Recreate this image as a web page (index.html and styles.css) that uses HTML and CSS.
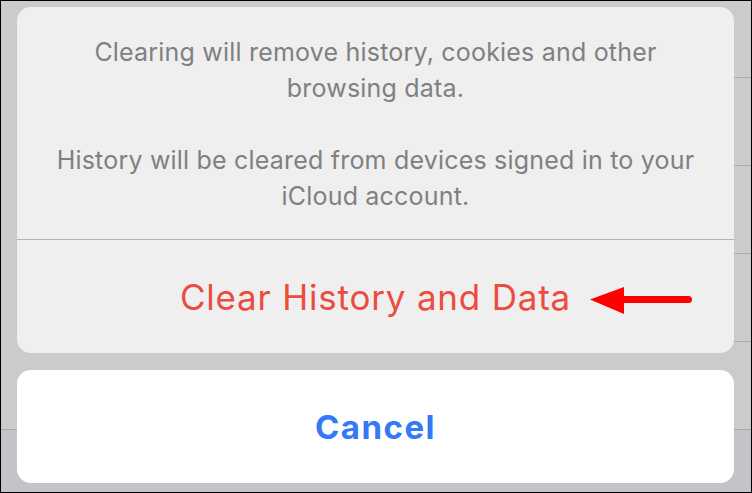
FILE: index.html
```html
<!DOCTYPE html>
<html lang="en">
<head>
  <meta charset="UTF-8">
  <meta name="viewport" content="width=device-width, initial-scale=1.0">
  <title>Clear History and Data</title>
  <link rel="stylesheet" href="styles.css">
</head>
<body>
  <!-- dimmed settings list behind the sheet -->
  <div class="list">
    <div class="row first"></div>
    <div class="row"></div>
    <div class="row"></div>
    <div class="row"></div>
    <div class="row"></div>
  </div>
  <div class="toolbar"></div>

  <div class="sheet">
    <div class="group">
      <div class="message">
        <p>Clearing will remove history, cookies and other<br>browsing data.</p>
        <p>History will be cleared from devices signed in to your<br>iCloud account.</p>
      </div>
      <div class="action">
        <span class="destructive">Clear History and Data</span>
        <svg class="arrow" width="106" height="32" viewBox="0 0 106 32">
          <polygon points="1,14.5 35,2 35,29" fill="#ff0000"/>
          <line x1="33" y1="14.5" x2="99.5" y2="14.5" stroke="#ff0000" stroke-width="7" stroke-linecap="round"/>
        </svg>
      </div>
    </div>
    <div class="cancel">Cancel</div>
  </div>
</body>
</html>
```

FILE: styles.css
```css
html, body {
  margin: 0;
}
body {
  width: 752px;
  height: 493px;
  box-sizing: border-box;
  border: 1px solid #000;
  background: #cbcbcb;
  position: relative;
  overflow: hidden;
  display: flex;
  flex-direction: column;
  font-family: Inter, "Liberation Sans", sans-serif;
}
.list {
  flex: 1;
  overflow: hidden;
}
.row {
  height: 87px;
  border-bottom: 1px solid #acacac;
  margin-left: 40px;
}
.row.first {
  margin-top: -11px;
}
.toolbar {
  height: 62px;
  border-top: 1px solid #a9a9ad;
  background: #c4c4c8;
}
.sheet {
  position: absolute;
  left: 16px;
  top: 6px;
  width: 717px;
  display: flex;
  flex-direction: column;
  gap: 17px;
}
.group {
  background: #efefef;
  border-radius: 14px;
  overflow: hidden;
}
.message {
  height: 233px;
  box-sizing: border-box;
  padding-top: 27px;
  border-bottom: 1px solid #b3b3b3;
  text-align: center;
  color: #808080;
  font-size: 25px;
  letter-spacing: 0.2px;
  line-height: 36px;
}
.message p {
  margin: 0 0 36px;
}
.action {
  position: relative;
  height: 113px;
  display: flex;
  align-items: center;
  justify-content: center;
}
.destructive {
  color: #eb4c3e;
  font-size: 35px;
  letter-spacing: 0.8px;
}
.arrow {
  position: absolute;
  left: 572px;
  top: 45px;
}
.cancel {
  height: 113px;
  background: #fff;
  border-radius: 14px;
  display: flex;
  align-items: center;
  justify-content: center;
  color: #3479f5;
  font-size: 33px;
  font-weight: 700;
  letter-spacing: 1.5px;
}
```
